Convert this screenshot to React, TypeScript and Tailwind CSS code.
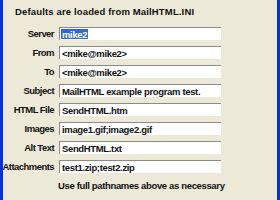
import React from "react";

const rows: [string, string, boolean?][] = [
  ["Server", "mike2", true],
  ["From", "<mike@mike2>"],
  ["To", "<mike@mike2>"],
  ["Subject", "MailHTML example program test."],
  ["HTML File", "SendHTML.htm"],
  ["Images", "image1.gif;image2.gif"],
  ["Alt Text", "SendHTML.txt"],
  ["Attachments", "test1.zip;test2.zip"],
];

export default function App() {
  return (
    <div
      className="w-[280px] h-[200px] bg-[#ECE9D8] border-x-[3px] border-[#0831D9] text-[9.5px] font-bold text-[#111] overflow-hidden"
      style={{ fontFamily: '"Liberation Sans", Arial, sans-serif' }}
    >
      <div className="h-[24px] pl-[12px] pt-[6px] leading-[12px] tracking-[0.15px] whitespace-nowrap">
        Defaults are loaded from MailHTML.INI
      </div>
      <div className="grid grid-cols-[51px_162px] gap-x-[5px]">
        {rows.map(([label, value, sel]) => (
          <React.Fragment key={label}>
            <div className="h-[19px] flex items-center justify-end leading-[12px] tracking-[-0.55px] whitespace-nowrap">
              {label}
            </div>
            <div className="h-[19px] flex items-center">
              <div className="w-[162px] h-[13px] bg-white border-t border-l border-[#8a8a8a] flex items-center pl-[1px] leading-[11px] whitespace-nowrap overflow-hidden tracking-[-0.35px]">
                {sel ? (
                  <span className="bg-[#316AC5] text-white px-[1px] h-[10px] flex items-center">{value}</span>
                ) : (
                  <span className="px-[1px]">{value}</span>
                )}
              </div>
            </div>
          </React.Fragment>
        ))}
        <div className="h-[19px]" />
        <div className="h-[19px] flex items-center leading-[12px] whitespace-nowrap -ml-[1px] tracking-[-0.35px]">
          Use full pathnames above as necessary
        </div>
      </div>
    </div>
  );
}
